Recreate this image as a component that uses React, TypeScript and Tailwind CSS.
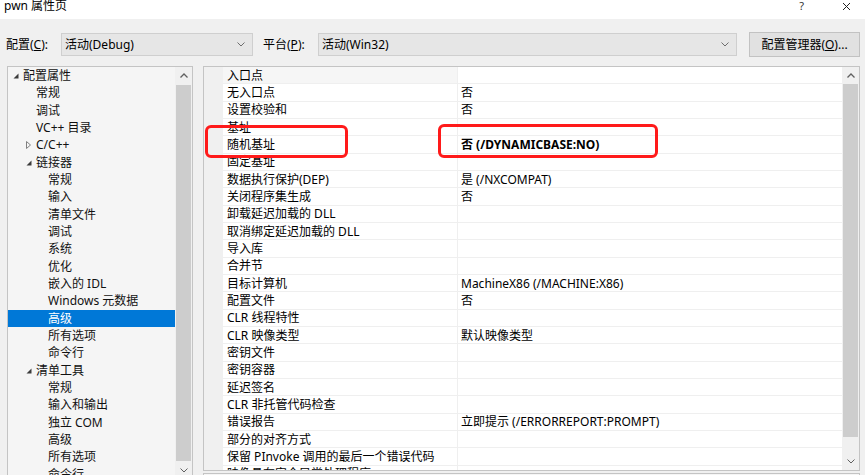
import React from "react";

type TreeItem = { label: string; level: 0 | 1 | 2; arrow?: "open" | "closed"; selected?: boolean };

const tree: TreeItem[] = [
  { label: "配置属性", level: 0, arrow: "open" },
  { label: "常规", level: 1 },
  { label: "调试", level: 1 },
  { label: "VC++ 目录", level: 1 },
  { label: "C/C++", level: 1, arrow: "closed" },
  { label: "链接器", level: 1, arrow: "open" },
  { label: "常规", level: 2 },
  { label: "输入", level: 2 },
  { label: "清单文件", level: 2 },
  { label: "调试", level: 2 },
  { label: "系统", level: 2 },
  { label: "优化", level: 2 },
  { label: "嵌入的 IDL", level: 2 },
  { label: "Windows 元数据", level: 2 },
  { label: "高级", level: 2, selected: true },
  { label: "所有选项", level: 2 },
  { label: "命令行", level: 2 },
  { label: "清单工具", level: 1, arrow: "open" },
  { label: "常规", level: 2 },
  { label: "输入和输出", level: 2 },
  { label: "独立 COM", level: 2 },
  { label: "高级", level: 2 },
  { label: "所有选项", level: 2 },
  { label: "命令行", level: 2 },
];

const props: { name: string; value: string; bold?: boolean }[] = [
  { name: "入口点", value: "" },
  { name: "无入口点", value: "否" },
  { name: "设置校验和", value: "否" },
  { name: "基址", value: "" },
  { name: "随机基址", value: "否 (/DYNAMICBASE:NO)", bold: true },
  { name: "固定基址", value: "" },
  { name: "数据执行保护(DEP)", value: "是 (/NXCOMPAT)" },
  { name: "关闭程序集生成", value: "否" },
  { name: "卸载延迟加载的 DLL", value: "" },
  { name: "取消绑定延迟加载的 DLL", value: "" },
  { name: "导入库", value: "" },
  { name: "合并节", value: "" },
  { name: "目标计算机", value: "MachineX86 (/MACHINE:X86)" },
  { name: "配置文件", value: "否" },
  { name: "CLR 线程特性", value: "" },
  { name: "CLR 映像类型", value: "默认映像类型" },
  { name: "密钥文件", value: "" },
  { name: "密钥容器", value: "" },
  { name: "延迟签名", value: "" },
  { name: "CLR 非托管代码检查", value: "" },
  { name: "错误报告", value: "立即提示 (/ERRORREPORT:PROMPT)" },
  { name: "部分的对齐方式", value: "" },
  { name: "保留 PInvoke 调用的最后一个错误代码", value: "" },
  { name: "映像具有安全异常处理程序", value: "" },
];

function ChevronDown({ color = "#6d6d6d" }: { color?: string }) {
  return (
    <svg width="8" height="5" viewBox="0 0 8 5">
      <path d="M0.5 0.5 L4 4 L7.5 0.5" fill="none" stroke={color} strokeWidth="1" />
    </svg>
  );
}

function ChevronUp({ color = "#606060" }: { color?: string }) {
  return (
    <svg width="8" height="5" viewBox="0 0 8 5">
      <path d="M0.5 4.5 L4 1 L7.5 4.5" fill="none" stroke={color} strokeWidth="1.3" />
    </svg>
  );
}

function Combo({ text, width }: { text: string; width: string }) {
  return (
    <div className={`${width} h-[23px] border border-[#cfcfcf] bg-[#e6e6e6] flex items-center pl-[3px] pr-[7px]`}>
      <span className="flex-1 text-[12px] leading-none pt-[1px]">{text}</span>
      <ChevronDown />
    </div>
  );
}

function Arrow({ kind }: { kind?: "open" | "closed" }) {
  if (kind === "open")
    return (
      <svg width="6" height="6" viewBox="0 0 6 6">
        <polygon points="5.5,0.5 5.5,5.5 0.5,5.5" fill="#3c3c3c" />
      </svg>
    );
  if (kind === "closed")
    return (
      <svg width="5" height="8" viewBox="0 0 5 8">
        <polygon points="0.5,0.5 4.5,4 0.5,7.5" fill="none" stroke="#808080" strokeWidth="1" />
      </svg>
    );
  return null;
}

export default function App() {
  return (
    <div className="relative w-[865px] h-[475px] overflow-hidden bg-[#f0f0f0] text-black font-['Noto_Sans','Noto_Sans_CJK_SC',sans-serif] flex flex-col">
      {/* Title bar */}
      <div className="h-[19px] bg-white flex items-start shrink-0">
        <span className="pl-[4px] text-[12px] leading-[12px]">pwn 属性页</span>
        <span className="ml-auto text-[11px] leading-[11px] text-[#333]">?</span>
        <div className="ml-[37px] mr-[13px] mt-[3px]">
          <svg width="11" height="7" viewBox="0 0 11 7">
            <path d="M1 0 L8 7 M8 0 L1 7" stroke="#222" strokeWidth="1" fill="none" transform="translate(1,0)" />
          </svg>
        </div>
      </div>

      {/* Toolbar */}
      <div className="h-[47px] shrink-0 flex items-start pt-[14px] pl-[6px]">
        <div className="w-[55px] h-[23px] flex items-center text-[12px] leading-none pt-[1px]">
          配置(<span className="underline">C</span>):
        </div>
        <Combo text="活动(Debug)" width="w-[192px]" />
        <div className="ml-[10px] w-[55px] h-[23px] flex items-center text-[12px] leading-none pt-[1px]">
          平台(<span className="underline">P</span>):
        </div>
        <Combo text="活动(Win32)" width="w-[419px]" />
        <div className="ml-[12px] -mt-[1px] w-[111px] h-[25px] border border-[#c2c2c2] bg-[#e1e1e1] flex items-center justify-center text-[12px] leading-none pt-[1px]">
          配置管理器(<span className="underline">O</span>)...
        </div>
      </div>

      {/* Main */}
      <div className="flex pl-[7px] items-start">
        {/* Tree */}
        <div className="w-[186px] h-[414px] border border-[#c4c4c4] bg-[#f5f5f5] flex shrink-0">
          <div className="flex-1 flex flex-col overflow-hidden">
            {tree.map((t, i) => (
              <div
                key={i}
                className={`h-[17.33px] shrink-0 flex items-center pt-[1px] text-[12px] leading-none ${
                  t.selected ? "bg-[#0078d7] text-white" : "text-[#111]"
                } ${t.level === 0 ? "pl-[5px]" : t.level === 1 ? "pl-[18px]" : "pl-[30px]"}`}
              >
                <span className="w-[10px] flex items-center">
                  <Arrow kind={t.arrow} />
                </span>
                <span className="whitespace-nowrap">{t.label}</span>
              </div>
            ))}
          </div>
          <div className="w-[17px] flex flex-col bg-[#f0f0f0]">
            <div className="h-[17px] flex items-center justify-center">
              <ChevronUp />
            </div>
            <div className="mt-[1px] mx-[1px] h-[376px] bg-[#cdcdcd]" />
            <div className="flex-1 flex items-center justify-center">
              <ChevronDown color="#606060" />
            </div>
          </div>
        </div>

        {/* Right */}
        <div className="ml-[10px] w-[657px] flex flex-col">
          <div className="h-[405px] border border-[#c4c4c4] bg-white flex">
            <div className="flex-1 flex flex-col overflow-hidden">
              {props.map((p, i) => (
                <div key={i} className="h-[17.33px] shrink-0 flex text-[12px] leading-none">
                  <div className="w-[19px] bg-[#f0f0f0] shrink-0" />
                  <div
                    className={`w-[235px] shrink-0 flex items-center pt-[1px] pl-[4px] border-b border-r border-[#efefef] whitespace-nowrap ${
                      i === 0 ? "bg-[#f6f6f6]" : ""
                    }`}
                  >
                    {p.name}
                  </div>
                  <div
                    className={`flex-1 flex items-center pt-[1px] pl-[3px] border-b border-[#efefef] whitespace-nowrap ${
                      p.bold ? "font-bold" : ""
                    }`}
                  >
                    {p.value}
                  </div>
                </div>
              ))}
            </div>
            <div className="w-[17px] flex flex-col bg-[#f0f0f0]">
              <div className="h-[17px] flex items-center justify-center">
                <ChevronUp />
              </div>
              <div className="mx-[1px] h-[353px] bg-[#cdcdcd]" />
              <div className="flex-1" />
              <div className="h-[17px] flex items-center justify-center">
                <ChevronDown color="#606060" />
              </div>
            </div>
          </div>
          <div className="mt-[2px] h-[40px] border border-[#c4c4c4] bg-[#f5f5f5]" />
        </div>
      </div>

      {/* Red annotation boxes */}
      <div className="absolute left-[205px] top-[125px] w-[143px] h-[33px] border-[3px] border-[#ff1a1a] rounded-[6px]" />
      <div className="absolute left-[438px] top-[124px] w-[220px] h-[34px] border-[3px] border-[#ff1a1a] rounded-[6px]" />
    </div>
  );
}
